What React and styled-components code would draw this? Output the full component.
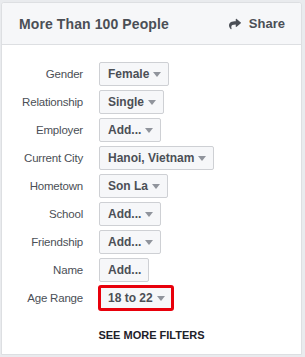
import React from 'react';
import styled, { createGlobalStyle } from 'styled-components';
import { FaShare } from 'react-icons/fa';

const GlobalStyle = createGlobalStyle`
  html, body {
    margin: 0;
    padding: 0;
    background: #e9ebee;
    font-family: "Liberation Sans", Arial, sans-serif;
  }
`;

const Page = styled.div`
  padding: 2px 3px 2px 1px;
  width: 301px;
`;

const Card = styled.div`
  background: #fff;
  border: 1px solid #dddfe2;
  border-radius: 3px 3px 0 0;
  height: 353px;
  box-sizing: border-box;
  display: flex;
  flex-direction: column;
`;

const Header = styled.div`
  height: 41px;
  display: flex;
  align-items: center;
  justify-content: space-between;
  padding: 0 16px 0 17px;
  background: #f6f7f9;
  border-bottom: 1px solid #dddfe2;
  border-radius: 3px 3px 0 0;
  color: #4b4f56;
`;

const Title = styled.h2`
  margin: 0;
  font-size: 14px;
  font-weight: bold;
  color: #4b4f56;
  letter-spacing: 0.1px;
`;

const Share = styled.a`
  display: flex;
  align-items: center;
  gap: 8px;
  font-size: 13px;
  font-weight: bold;
  color: #4b4f56;
  text-decoration: none;

  svg {
    width: 12px;
    height: 12px;
    color: #4b4f56;
  }
`;

const Filters = styled.div`
  display: grid;
  grid-template-columns: 81px auto;
  column-gap: 16px;
  row-gap: 4px;
  padding: 17px 0 0 0;
  justify-items: start;
  align-items: center;
`;

const Label = styled.div`
  justify-self: end;
  font-size: 11.5px;
  color: #4b4f56;
  letter-spacing: -0.2px;
`;

const Button = styled.button`
  height: 24px;
  box-sizing: border-box;
  display: inline-flex;
  align-items: center;
  gap: 4px;
  padding: 0 7px 0 8px;
  background: #f6f7f9;
  border: 1px solid #ced0d4;
  border-radius: 2px;
  font-family: "Liberation Sans", Arial, sans-serif;
  font-size: 12px;
  font-weight: bold;
  color: #4b4f56;
  outline: ${(p) => (p.$highlight ? '3px solid #e8000b' : 'none')};
  outline-offset: -2px;
`;

const Caret = styled.span`
  width: 0;
  height: 0;
  border-left: 4.5px solid transparent;
  border-right: 4.5px solid transparent;
  border-top: 5px solid #90949c;
  margin-top: 1px;
`;

const More = styled.div`
  margin-top: 19px;
  text-align: center;
  font-size: 11px;
  font-weight: bold;
  color: #1d2129;
`;

const filters = [
  { label: 'Gender', value: 'Female' },
  { label: 'Relationship', value: 'Single' },
  { label: 'Employer', value: 'Add...' },
  { label: 'Current City', value: 'Hanoi, Vietnam' },
  { label: 'Hometown', value: 'Son La' },
  { label: 'School', value: 'Add...' },
  { label: 'Friendship', value: 'Add...' },
  { label: 'Name', value: 'Add...', noCaret: true },
  { label: 'Age Range', value: '18 to 22', highlight: true },
];

export default function App() {
  return (
    <>
      <GlobalStyle />
      <Page>
        <Card>
          <Header>
            <Title>More Than 100 People</Title>
            <Share href="#">
              <FaShare />
              Share
            </Share>
          </Header>
          <Filters>
            {filters.map((f) => (
              <React.Fragment key={f.label}>
                <Label>{f.label}</Label>
                <Button $highlight={f.highlight}>
                  {f.value}
                  {!f.noCaret && <Caret />}
                </Button>
              </React.Fragment>
            ))}
          </Filters>
          <More>SEE MORE FILTERS</More>
        </Card>
      </Page>
    </>
  );
}
